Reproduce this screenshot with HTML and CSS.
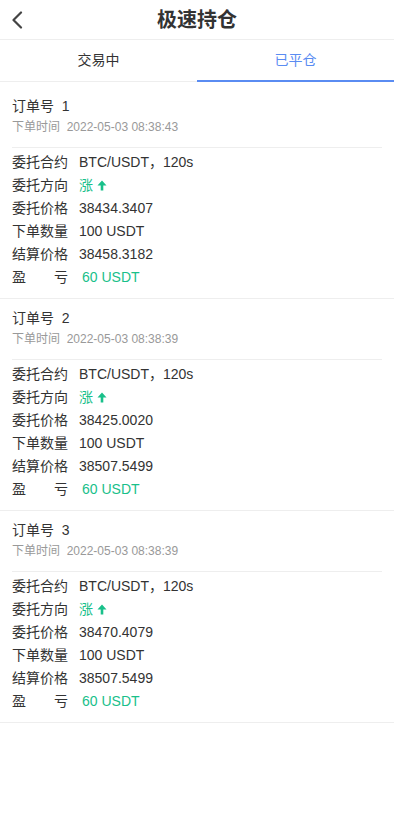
FILE: index.html
```html
<!DOCTYPE html>
<html lang="zh-CN">
<head>
    <meta charset="UTF-8">
    <meta name="viewport" content="width=device-width, initial-scale=1.0">
    <title>极速持仓</title>
    <link rel="stylesheet" href="styles.css">
</head>
<body>
    <div class="header">
        <span class="back">
            <svg width="12" height="18" viewBox="0 0 12 18"><path d="M10 1.5 L2.5 9 L10 16.5" fill="none" stroke="#444" stroke-width="2.2" stroke-linecap="round" stroke-linejoin="round"/></svg>
        </span>
        <h1>极速持仓</h1>
    </div>
    <div class="tabs">
        <div class="tab">交易中</div>
        <div class="tab active">已平仓</div>
    </div>

    <div class="list">
        <div class="card">
            <div class="order">订单号&nbsp; 1</div>
            <div class="time">下单时间&nbsp; 2022-05-03 08:38:43</div>
            <div class="divider"></div>
            <div class="row"><span class="label">委托合约</span><span class="value">BTC/USDT，120s</span></div>
            <div class="row"><span class="label">委托方向</span><span class="value up">涨 <svg class="arrow" width="10" height="11" viewBox="0 0 10 11"><path d="M5 0.5 L9.5 5.5 L6.3 5.5 L6.3 10.5 L3.7 10.5 L3.7 5.5 L0.5 5.5 Z" fill="#19c08a"/></svg></span></div>
            <div class="row"><span class="label">委托价格</span><span class="value">38434.3407</span></div>
            <div class="row"><span class="label">下单数量</span><span class="value">100 USDT</span></div>
            <div class="row"><span class="label">结算价格</span><span class="value">38458.3182</span></div>
            <div class="row"><span class="label">盈亏</span><span class="value profit">60 USDT</span></div>
        </div>
        <div class="card">
            <div class="order">订单号&nbsp; 2</div>
            <div class="time">下单时间&nbsp; 2022-05-03 08:38:39</div>
            <div class="divider"></div>
            <div class="row"><span class="label">委托合约</span><span class="value">BTC/USDT，120s</span></div>
            <div class="row"><span class="label">委托方向</span><span class="value up">涨 <svg class="arrow" width="10" height="11" viewBox="0 0 10 11"><path d="M5 0.5 L9.5 5.5 L6.3 5.5 L6.3 10.5 L3.7 10.5 L3.7 5.5 L0.5 5.5 Z" fill="#19c08a"/></svg></span></div>
            <div class="row"><span class="label">委托价格</span><span class="value">38425.0020</span></div>
            <div class="row"><span class="label">下单数量</span><span class="value">100 USDT</span></div>
            <div class="row"><span class="label">结算价格</span><span class="value">38507.5499</span></div>
            <div class="row"><span class="label">盈亏</span><span class="value profit">60 USDT</span></div>
        </div>
        <div class="card">
            <div class="order">订单号&nbsp; 3</div>
            <div class="time">下单时间&nbsp; 2022-05-03 08:38:39</div>
            <div class="divider"></div>
            <div class="row"><span class="label">委托合约</span><span class="value">BTC/USDT，120s</span></div>
            <div class="row"><span class="label">委托方向</span><span class="value up">涨 <svg class="arrow" width="10" height="11" viewBox="0 0 10 11"><path d="M5 0.5 L9.5 5.5 L6.3 5.5 L6.3 10.5 L3.7 10.5 L3.7 5.5 L0.5 5.5 Z" fill="#19c08a"/></svg></span></div>
            <div class="row"><span class="label">委托价格</span><span class="value">38470.4079</span></div>
            <div class="row"><span class="label">下单数量</span><span class="value">100 USDT</span></div>
            <div class="row"><span class="label">结算价格</span><span class="value">38507.5499</span></div>
            <div class="row"><span class="label">盈亏</span><span class="value profit">60 USDT</span></div>
        </div>
    </div>
</body>
</html>
```

FILE: styles.css
```css
body {
    margin: 0;
    font-family: "Liberation Sans", "Noto Sans CJK SC", sans-serif;
    background: #fff;
    color: #333;
}
.header {
    height: 39px;
    display: flex;
    align-items: center;
    justify-content: center;
    position: relative;
    border-bottom: 1px solid #eee;
}
.back {
    position: absolute;
    left: 11px;
    top: 11px;
}
h1 {
    margin: 0;
    font-size: 20px;
    font-weight: bold;
    color: #333;
    line-height: 40px;
}
.tabs {
    display: flex;
    height: 41px;
    border-bottom: 1px solid #eee;
}
.tab {
    flex: 1;
    text-align: center;
    font-size: 14px;
    line-height: 41px;
    color: #333;
}
.tab.active {
    color: #5a8cf2;
    border-bottom: 2px solid #5a8cf2;
    margin-bottom: -1px;
}
.list {
    padding-top: 5px;
}
.card {
    padding: 8px 12px 9px;
    border-bottom: 1px solid #eee;
}
.order {
    font-size: 14px;
    line-height: 22px;
    color: #333;
}
.time {
    font-size: 12px;
    line-height: 20px;
    color: #999;
}
.divider {
    height: 1px;
    background: #eee;
    margin: 10px 0 3px;
}
.row {
    display: flex;
    align-items: center;
    font-size: 14px;
    line-height: 23px;
    height: 23px;
}
.label {
    width: 56px;
    text-align: justify;
    text-align-last: justify;
    margin-right: 11px;
    color: #333;
}
.value {
    color: #333;
}
.up {
    color: #19c08a;
}
.arrow {
    vertical-align: -1px;
}
.profit {
    color: #19c08a;
    margin-left: 3px;
}
```
